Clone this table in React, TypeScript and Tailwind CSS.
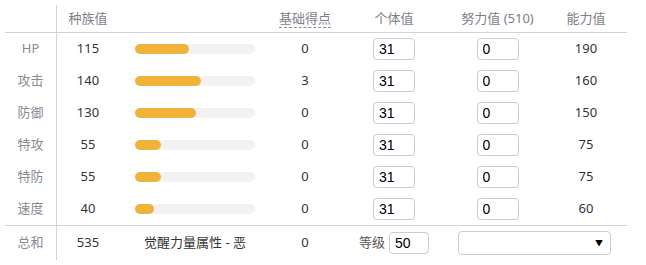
import React from "react";

const stats = [
  { label: "HP", base: 115, pts: 0, iv: 31, ev: 0, total: 190 },
  { label: "攻击", base: 140, pts: 3, iv: 31, ev: 0, total: 160 },
  { label: "防御", base: 130, pts: 0, iv: 31, ev: 0, total: 150 },
  { label: "特攻", base: 55, pts: 0, iv: 31, ev: 0, total: 75 },
  { label: "特防", base: 55, pts: 0, iv: 31, ev: 0, total: 75 },
  { label: "速度", base: 40, pts: 0, iv: 31, ev: 0, total: 60 },
];

function NumInput({ value, w = "w-[42px]" }: { value: number; w?: string }) {
  return (
    <input
      readOnly
      value={value}
      className={`${w} h-[22px] rounded-[4px] border border-[#c9cdd3] bg-white pl-[5px] text-[14px] text-black outline-none [font-family:'Liberation_Sans',Arial,sans-serif]`}
    />
  );
}

export default function App() {
  return (
    <div className="h-[265px] w-[646px] bg-white pt-[5px] pl-[5px] text-[13px] text-[#333] [font-family:'Noto_Sans','Noto_Sans_CJK_SC',sans-serif]">
      <div className="w-[622px]">
        {/* header */}
        <div className="flex h-[28px] items-center border-b border-[#cfd4db] text-[#7b8088]">
          <div className="h-full w-[52px] border-r border-[#cfd4db]" />
          <div className="w-[62px] text-center">种族值</div>
          <div className="w-[152px]" />
          <div className="flex w-[68px] justify-center">
            <span className="border-b border-dashed border-[#8a8f96] leading-[17px]">基础得点</span>
          </div>
          <div className="w-[110px] text-center">个体值</div>
          <div className="w-[97px] text-center">努力值 (510)</div>
          <div className="w-[80px] text-center">能力值</div>
        </div>

        {/* rows */}
        <div className="border-b border-[#cfd4db]">
          {stats.map((s) => (
            <div key={s.label} className="flex h-[32px] items-center">
              <div className="flex h-full w-[52px] items-center justify-center border-r border-[#cfd4db] text-[#868b93]">
                {s.label}
              </div>
              <div className="w-[62px] text-center">{s.base}</div>
              <div className="w-[152px] pl-[16px]">
                <div className="h-[10px] w-[120px] rounded-full bg-[#f2f2f2]">
                  <div
                    className="h-full rounded-full bg-[#efb33b]"
                    style={{ width: `${(s.base / 255) * 120}px` }}
                  />
                </div>
              </div>
              <div className="w-[68px] text-center">{s.pts}</div>
              <div className="flex w-[110px] justify-center">
                <NumInput value={s.iv} />
              </div>
              <div className="flex w-[97px] justify-center">
                <NumInput value={s.ev} />
              </div>
              <div className="w-[80px] text-center">{s.total}</div>
            </div>
          ))}
        </div>

        {/* total row */}
        <div className="flex h-[34px] items-center">
          <div className="flex h-full w-[52px] items-center justify-center border-r border-[#cfd4db] text-[#868b93]">
            总和
          </div>
          <div className="w-[62px] text-center">535</div>
          <div className="w-[152px] text-center">觉醒力量属性 - 恶</div>
          <div className="w-[68px] text-center">0</div>
          <div className="flex w-[110px] items-center justify-center gap-[4px]">
            <span className="text-[#555]">等级</span>
            <NumInput value={50} w="w-[40px]" />
          </div>
          <div className="w-[177px] pl-[9px]">
            <div className="flex h-[24px] w-[153px] items-center justify-end rounded-[4px] border border-[#c9cdd3] bg-white pr-[7px]">
              <span className="text-[8px] text-black">▼</span>
            </div>
          </div>
        </div>
      </div>
    </div>
  );
}
